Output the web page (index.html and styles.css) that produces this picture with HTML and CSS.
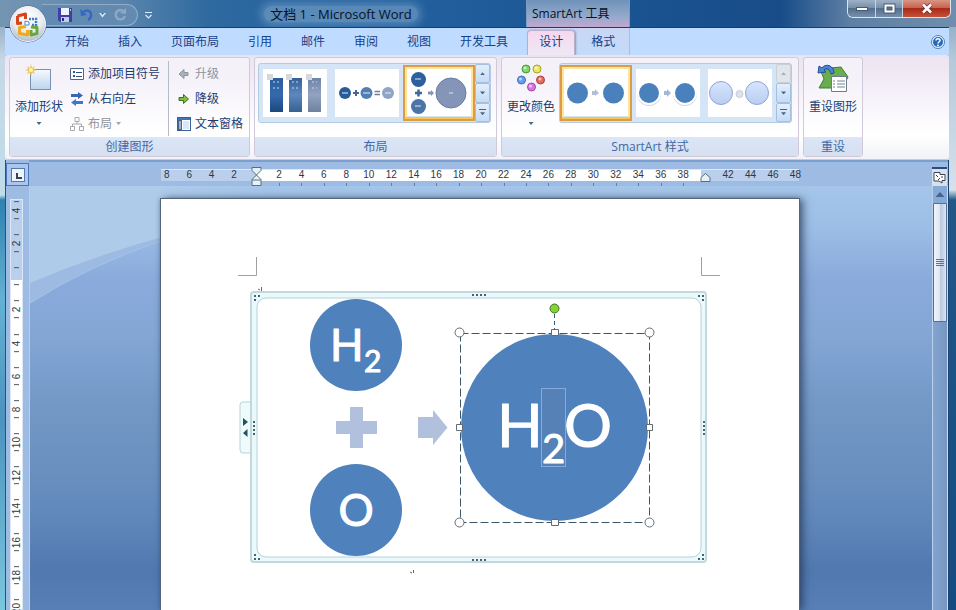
FILE: index.html
```html
<!DOCTYPE html>
<html lang="zh-CN">
<head>
<meta charset="utf-8">
<title>文档 1 - Microsoft Word</title>
<link rel="stylesheet" href="styles.css">
</head>
<body>
<div class="window">
  <header class="titlebar">
    <div class="quick">
      <button class="tool" aria-label="保存"><svg width="14" height="14" viewBox="0 0 14 14"><path d="M0 0H14V14H2L0 12Z" fill="#403fa6"/><path d="M3 0H11V7H3Z" fill="#eef2ff"/><path d="M3 9H11V14H3Z" fill="#c6cbe6"/><path d="M4 10H6V13H4Z" fill="#222a7a"/><path d="M12 1H13V3H12Z" fill="#b9c4f5"/></svg></button>
      <button class="tool" aria-label="撤消"><svg width="13" height="14" viewBox="0 0 13 14"><path d="M2 5C6 1 11 2 11 7C11 9 10 11 8 12" fill="none" stroke="#3567c6" stroke-width="2.4"/><path d="M0 1L1 8L7 7Z" fill="#3567c6"/></svg></button>
      <button class="tool narrow" aria-label="撤消列表"><svg width="7" height="5" viewBox="0 0 7 5"><path d="M0 0H7L3.500 4.500Z" fill="#d8e6f5"/><path d="M2 0H5L3.500 2Z" fill="#45698f"/></svg></button>
      <button class="tool" aria-label="恢复"><svg width="13" height="14" viewBox="0 0 13 14"><path d="M10 4C6 0 1 3 2 8C3 12 9 13 11 8" fill="none" stroke="#8ea8c2" stroke-width="2.400"/><path d="M6 5L12 6L12 0Z" fill="#8ea8c2"/></svg></button>
    </div>
    <button class="customize" aria-label="自定义快速访问工具栏"><svg width="7" height="7" viewBox="0 0 7 7"><path d="M0 .5H7" stroke="#dceafa"/><path d="M.5 3L3.500 6L6.500 3" fill="none" stroke="#dceafa" stroke-width="1.200"/></svg></button>
    <h1 class="doc-title"><span>文档 1 - Microsoft Word</span></h1>
    <div class="context-title"><span>SmartArt 工具</span></div>
    <div class="controls">
      <button aria-label="最小化"><svg width="12" height="6" viewBox="0 0 12 6"><rect x=".5" y="1.500" width="11" height="3" fill="#fff" stroke="#4a5a6c"/></svg></button>
      <button aria-label="还原"><svg width="13" height="11" viewBox="0 0 13 11"><rect x="1" y="1" width="11" height="9" fill="#fff" stroke="#4a5a6c"/><rect x="4" y="4" width="5" height="3" fill="#60748c" stroke="#4a5a6c"/></svg></button>
      <button class="close" aria-label="关闭"><svg width="12" height="11" viewBox="0 0 12 11"><path d="M2 1.500L10 9.500M10 1.500L2 9.500" stroke="#6c3431" stroke-width="4"/><path d="M2 1.500L10 9.500M10 1.500L2 9.500" stroke="#fff" stroke-width="2.500"/></svg></button>
    </div>
  </header>
  <button class="office" aria-label="Office 按钮">
    <svg width="38" height="38" viewBox="0 0 38 38">
      <defs><radialGradient id="orb" cx=".5" cy=".3" r=".75"><stop offset="0" stop-color="#fff"/><stop offset=".6" stop-color="#e6eaf0"/><stop offset="1" stop-color="#a4b0c2"/></radialGradient></defs>
      <circle cx="19" cy="19" r="18.500" fill="#4b6787"/><circle cx="19" cy="19" r="17.500" fill="url(#orb)" stroke="#f4f7fa"/>
      <path d="M8.500 11L16.500 9V14M8.500 11V18.500L13 18" fill="none" stroke="#d9431c" stroke-width="3" stroke-linejoin="round"/>
      <path d="M20 14H27V20H22" fill="none" stroke="#3c80c4" stroke-width="2.500" stroke-dasharray="2 1"/>
      <path d="M16 16L20 17V20H16Z" fill="#fff" stroke="#4a8ccb"/>
      <path d="M17 21.500L10.500 22.500V28.500L18.500 30V25" fill="none" stroke="#efa91b" stroke-width="3" stroke-linejoin="round"/>
      <path d="M22 22L28 22.500V28.500L22 30V25" fill="none" stroke="#68a83a" stroke-width="3" stroke-linejoin="round"/>
    </svg>
  </button>
  <nav class="tabs">
    <a href="#">开始</a><a href="#">插入</a><a href="#">页面布局</a><a href="#">引用</a><a href="#">邮件</a><a href="#">审阅</a><a href="#">视图</a><a href="#">开发工具</a>
    <div class="context-tabs"><a href="#" class="active">设计</a><a href="#">格式</a></div>
    <button class="help" aria-label="帮助"><svg width="14" height="14" viewBox="0 0 14 14"><circle cx="7" cy="7" r="6.500" fill="#eef5ff" stroke="#4a80c0"/><circle cx="7" cy="7" r="5" fill="#246abc"/><path d="M5 5.500C5 3 9 3 9 5.500C9 7 7 7 7 8.500" fill="none" stroke="#fff" stroke-width="1.500"/><circle cx="7" cy="10.500" r="1" fill="#fff"/></svg></button>
  </nav>

  <section class="ribbon">
    <div class="group">
      <div class="group-body">
        <button class="big"><svg width="28" height="28" viewBox="0 0 28 28"><defs><linearGradient id="sq" x2="0" y2="1"><stop offset="0" stop-color="#f6faff"/><stop offset="1" stop-color="#bcd4f0"/></linearGradient></defs><rect x="5.500" y="5.500" width="20" height="20" fill="url(#sq)" stroke="#7890b4"/><path d="M6 0L7 4L10 2L8.500 5L12 6L8.500 7L10 10L7 8.500L6 12L5 8.500L2 10L3.500 7L0 6L3.500 5L2 2L5 4Z" fill="#edc24c"/><circle cx="6" cy="6" r="2" fill="#fff6b0"/></svg>添加形状<i class="arrow"></i></button>
        <div class="stack lined">
          <button><svg width="14" height="14" viewBox="0 0 14 14"><path d="M.5 1.500H13.500V12.500H.5Z" fill="#fff" stroke="#4f6689"/><path d="M3 4H5V6H3ZM3 8H5V10H3ZM6 5H12V6H6ZM6 9H12V10H6Z" fill="#314f86"/></svg>添加项目符号</button>
          <button><svg width="14" height="14" viewBox="0 0 14 14"><path d="M1 2H8V0L13 3.500L8 7V5H1Z" fill="#3468b5"/><path d="M13 9H6V7L1 10.500L6 14V12H13Z" fill="#3e77c8"/></svg>从右向左</button>
          <button class="off"><svg width="14" height="14" viewBox="0 0 14 14"><path d="M5 .5H9V4.500H5ZM.5 9.500H4.500V13.500H.5ZM9.500 9.500H13.500V13.500H9.500ZM7 5V7M2.500 9V7H11.500V9" fill="none" stroke="#a5a8ae"/></svg>布局<i class="arrow"></i></button>
        </div>
        <div class="stack">
          <button class="off"><svg width="14" height="14" viewBox="0 0 14 14"><path d="M2 7L7 2.500V5.500H11V8.500H7V11.500Z" fill="#a9b1ba" stroke="#8996a4"/></svg>升级</button>
          <button><svg width="14" height="14" viewBox="0 0 14 14"><path d="M11.500 7L6.500 2.500V5.500H2V8.500H6.500V11.500Z" fill="#7fbe3c" stroke="#3e6d2c"/></svg>降级</button>
          <button><svg width="14" height="14" viewBox="0 0 14 14"><rect x=".5" y=".5" width="13" height="13" fill="#fff" stroke="#3e5f91"/><path d="M1 1H13V3H1Z" fill="#4371b6"/><path d="M1 3H5V13H1Z" fill="#3e6498"/><path d="M2 5H4M2 7H4M2 9H4M2 11H4" stroke="#fff"/><path d="M6 4H12V12H6Z" fill="#d7e6fa"/></svg>文本窗格</button>
        </div>
      </div>
      <h2>创建图形</h2>
    </div>

    <div class="group">
      <div class="group-body gallery-body">
        <div class="gallery">
          <button class="thumb" aria-label="梯形列表"><svg width="72" height="56" viewBox="0 0 72 56"><defs><linearGradient id="a" x2="0" y2="1"><stop stop-color="#2d5d9c"/><stop offset=".5" stop-color="#336aac"/><stop offset="1" stop-color="#1b477e"/></linearGradient><linearGradient id="b" x2="0" y2="1"><stop stop-color="#355f98"/><stop offset=".5" stop-color="#5d88bd"/><stop offset="1" stop-color="#36608f"/></linearGradient><linearGradient id="c" x2="0" y2="1"><stop stop-color="#7084aa"/><stop offset=".5" stop-color="#92a2c0"/><stop offset="1" stop-color="#6e819f"/></linearGradient></defs><path d="M4 4H68V52H4Z" fill="#fff"/><path d="M11 13H24V47H11Z" fill="url(#a)"/><path d="M30 13H43V47H30Z" fill="url(#b)"/><path d="M49 13H62V47H49Z" fill="url(#c)"/><path d="M8 9H14V15H8ZM27 9H33V15H27ZM47 9H53V15H47Z" fill="#d5d8dd"/><path d="M14 17H20M14 23H20M33 17H39M33 23H39M53 17H58M53 23H58" stroke="#c9d8ef" stroke-dasharray="2 2"/></svg></button>
          <button class="thumb" aria-label="公式"><svg width="72" height="56" viewBox="0 0 72 56"><path d="M4 4H68V52H4Z" fill="#fff"/><circle cx="14" cy="28" r="6" fill="#285c98"/><circle cx="35.500" cy="28" r="6" fill="#507fb5"/><circle cx="57" cy="28" r="6" fill="#8fa5c3"/><path d="M11 28H17M32 28H39M54 28H60" stroke="#e6eff9"/><path d="M22 28H28M25 25V31" stroke="#4b658f" stroke-width="2"/><path d="M43.500 26.500H49M43.500 29.500H49" stroke="#6f7f96" stroke-width="1.500"/></svg></button>
          <button class="thumb selected" aria-label="垂直公式"><svg width="72" height="56" viewBox="0 0 72 56"><path d="M3 3H69V53H3Z" fill="#fff"/><circle cx="15.500" cy="14.500" r="7.500" fill="#2c619e"/><circle cx="15.500" cy="41.500" r="7.500" fill="#4b74a8"/><path d="M12 28H19M15.500 24.500V31.500" stroke="#3c689e" stroke-width="2.500"/><path d="M25 26.500H28V25L31 28L28 31V29.500H25Z" fill="#8194b6"/><circle cx="48" cy="28" r="15" fill="#8495b8" stroke="#687ca4"/><path d="M12 14H18M12 41H18M46 28H50" stroke="#dfe8f4"/></svg></button>
          <div class="scroller"><button aria-label="上一行"><i class="arrow up"></i></button><button aria-label="下一行"><i class="arrow"></i></button><button aria-label="更多布局"><i class="arrow more"></i></button></div>
        </div>
      </div>
      <h2>布局</h2>
    </div>

    <div class="group">
      <div class="group-body styles-body">
        <button class="big"><svg width="28" height="28" viewBox="0 0 28 28"><circle cx="9" cy="5" r="4" fill="#80d66b" stroke="#499940"/><circle cx="20" cy="5" r="4" fill="#eee659" stroke="#a39f3c"/><circle cx="4.500" cy="16" r="4" fill="#649bed" stroke="#416eb8"/><circle cx="23.500" cy="16" r="4" fill="#e46962" stroke="#aa443d"/><circle cx="14.500" cy="23" r="4" fill="#d973e5" stroke="#9c48ac"/><g fill="#fff" opacity=".6"><circle cx="8" cy="4" r="1.500"/><circle cx="19" cy="4" r="1.500"/><circle cx="3.500" cy="15" r="1.500"/><circle cx="23" cy="15" r="1.500"/><circle cx="13.500" cy="22" r="1.500"/></g></svg>更改颜色<i class="arrow"></i></button>
        <div class="gallery">
          <button class="thumb selected" aria-label="简单填充"><svg width="72" height="56" viewBox="0 0 72 56"><path d="M3 3H69V53H3Z" fill="#fff"/><circle cx="17.500" cy="28" r="10.500" fill="#4a81bd"/><circle cx="53.500" cy="28" r="10.500" fill="#4a81bd"/><path d="M32 26H35V24L39 28L35 31V30H32Z" fill="#b0bfdb"/></svg></button>
          <button class="thumb" aria-label="白色轮廓"><svg width="72" height="56" viewBox="0 0 72 56"><path d="M4 4H68V52H4Z" fill="#fff"/><circle cx="17" cy="29" r="12" fill="#d0d6de"/><circle cx="53" cy="29" r="12" fill="#d0d6de"/><circle cx="17" cy="28" r="11" fill="#4a81bd" stroke="#fff" stroke-width="2"/><circle cx="53" cy="28" r="11" fill="#4a81bd" stroke="#fff" stroke-width="2"/><path d="M32 26H35V24L39 28L35 32V30H32Z" fill="#a5b7d5"/></svg></button>
          <button class="thumb" aria-label="细微效果"><svg width="72" height="56" viewBox="0 0 72 56"><defs><linearGradient id="d" x2="0" y2="1"><stop stop-color="#d7e6ff"/><stop offset="1" stop-color="#b8cdf0"/></linearGradient></defs><path d="M4 4H68V52H4Z" fill="#fff"/><circle cx="17" cy="28" r="11.500" fill="url(#d)" stroke="#91a5cf"/><circle cx="53" cy="28" r="11.500" fill="url(#d)" stroke="#91a5cf"/><circle cx="35.500" cy="29" r="3.500" fill="#dde1ec" stroke="#c7ccda"/></svg></button>
          <div class="scroller"><button disabled aria-label="上一行"><i class="arrow up"></i></button><button aria-label="下一行"><i class="arrow"></i></button><button aria-label="更多样式"><i class="arrow more"></i></button></div>
        </div>
      </div>
      <h2>SmartArt 样式</h2>
    </div>

    <div class="group">
      <div class="group-body reset-body">
        <button class="big"><svg width="32" height="28" viewBox="0 0 32 28"><path d="M3 5L24 3L31 13L25 24H2L7 15Z" fill="#69ad4e" stroke="#39813a"/><path d="M14.500 12.500H29.500V27.500H14.500Z" fill="#fff" stroke="#6d7d87"/><path d="M16 17H18M20 17H28M16 20H18M20 20H28M16 23H18M20 23H28" stroke="#71828f"/><path d="M17 9C17 1 8 -1 5 4L2 2L1 9L9 8L7 6C10 3 13 6 14 10Z" fill="#4a83d7" stroke="#234e98"/></svg>重设图形</button>
      </div>
      <h2>重设</h2>
    </div>
  </section>

  <main class="work">
    <div class="corner"><button aria-label="左对齐制表符"><b></b></button></div>
    <div class="hruler-row">
      <div class="hruler">
        <div class="hcells"><span>8</span><span>6</span><span>4</span><span>2</span><span class="stop"><svg class="indent" width="11" height="19" viewBox="0 0 11 19"><path d="M1 .5H10V3.500L5.500 8L10 12.500V18.500H1V12.500L5.500 8L1 3.500ZM1 13H10" fill="#e7f0f6" stroke="#52727f"/></svg></span><span>2</span><span>4</span><span>6</span><span>8</span><span>10</span><span>12</span><span>14</span><span>16</span><span>18</span><span>20</span><span>22</span><span>24</span><span>26</span><span>28</span><span>30</span><span>32</span><span>34</span><span>36</span><span>38</span><span class="stop"><svg class="right-indent" width="11" height="9" viewBox="0 0 11 9"><path d="M1 8.500V4.500L5.500 .5L10 4.500V8.500Z" fill="#e7f0f6" stroke="#52727f"/></svg></span><span>42</span><span>44</span><span>46</span><span>48</span></div>
      </div>
    </div>
    <div class="toggle"><button aria-label="标尺"><svg width="13" height="13" viewBox="0 0 13 13"><path d="M1 1.500H7V3.500H12V9.500H9V12L6 10H1Z" fill="#fff" stroke="#3b4353"/><path d="M3 4L5 6M8 6H10M5 9L7 7" stroke="#3b4353"/></svg></button></div>

    <div class="vruler-col"><div class="vruler"><span>4</span><span>2</span><span></span><span>2</span><span>4</span><span>6</span><span>8</span><span>10</span><span>12</span><span>14</span><span>16</span><span>18</span><span>20</span></div></div>

    <div class="canvas">
      <svg class="swoosh" width="240" height="120" viewBox="0 0 240 120"><defs><linearGradient id="sw"><stop offset=".55" stop-color="#aecbea"/><stop offset="1" stop-color="#aecbea" stop-opacity="0"/></linearGradient></defs><path d="M0 0H134V54Q60 79 0 117Z" fill="#9dbbe2"/><path d="M0 0H240V26Q110 50 0 97Z" fill="url(#sw)"/><path d="M0 117Q60 79 133 54" fill="none" stroke="#a5c3e7"/></svg>
      <article class="page">
        <svg class="art" viewBox="161 199 638 411" role="img" aria-label="SmartArt 图形">
          <path d="M238 275.500H256.500V257M720 275.500H701.500V257" fill="none" stroke="#a0a0a0"/>
          <path d="M261.500 287V291M260 290L258 289M413.500 570V573M412 573L410 572" stroke="#666"/>
          <path d="M251.500 402H243Q240 402 240 405V450Q240 453 243 453H251.500Z" fill="#effafb" stroke="#b6d3d6"/>
          <rect x="251" y="292" width="455" height="270" rx="3" fill="#eaf9fb" stroke="#c3d8dc" stroke-width="2"/>
          <rect x="257" y="298" width="444" height="259" rx="9" fill="#fff" stroke="#b9d0d6"/>
          <path d="M243 418L248 422L243 426ZM247.500 429L243 433L247.500 437Z" fill="#205463"/>
          <g fill="none" stroke="#44666f" stroke-width="2"><path d="M472 295H487M472 560H487" stroke-dasharray="2 2"/><path d="M254 421V435M704 421V435" stroke-dasharray="2 2"/><path d="M254 296H260M254 300H256M698 296H704M702 300H704M254 555H256M254 559H260M702 555H704M698 559H704" stroke-dasharray="2 2"/></g>
          <g fill="#4f81bc"><circle cx="356" cy="345" r="46"/><circle cx="356" cy="510" r="46"/><circle cx="554.500" cy="427.500" r="93.500"/></g>
          <path d="M350 407H363V421H377V434H363V448H350V434H336V421H350ZM418 417H433V410L447.500 427.500L433 445V438H418Z" fill="#b1c1dd"/>
          <rect x="541.500" y="388.500" width="24" height="78" fill="#5581b7" stroke="#85aadb"/>
          <g class="formula"><text x="330" y="361" class="small">H</text><text x="364" y="372" class="small-sub">2</text><text x="356" y="526" class="small mid">O</text><text x="497" y="447" class="large">H</text><text x="542" y="463" class="large-sub">2</text><text x="564" y="447" class="large">O</text></g>
          <path d="M460.500 333.500H649.500V522.500H460.500Z" fill="none" stroke="#3c5868" stroke-dasharray="8 3"/>
          <path d="M554.500 314V329" stroke="#3c5878" stroke-dasharray="4 3"/>
          <circle cx="554.500" cy="308.500" r="4.500" fill="#80d52e" stroke="#496b34"/>
          <g fill="#fff" stroke="#606d76"><circle cx="459.500" cy="332.500" r="4.500"/><circle cx="649.500" cy="332.500" r="4.500"/><circle cx="459.500" cy="522.500" r="4.500"/><circle cx="649.500" cy="522.500" r="4.500"/><path d="M551.500 329.500H558.500V335.500H551.500ZM551.500 519.500H558.500V525.500H551.500ZM456.500 424.500H462.500V430.500H456.500ZM646.500 424.500H652.500V430.500H646.500Z"/></g>
        </svg>
      </article>
    </div>
    <div class="scrollbar"><button class="line-up" aria-label="向上滚动"><i class="arrow up"></i></button><div class="handle"><b></b></div></div>
  </main>
</div>
</body>
</html>
```
FILE: styles.css
```css
* { box-sizing: border-box; }
body {
  margin: 0;
  height: 100vh;
  overflow: hidden;
  font: 12px/16px "Open Sans", "Noto Sans CJK SC", sans-serif;
  color: #1c3d70;
  background: linear-gradient(#7c9ebc 0, #b5c9da 60px, #d5e1ec 190px, #205888 200px, #164a82 100%);
}
button { border: 0; padding: 0; margin: 0; background: none; font: inherit; color: inherit; }
a { color: inherit; text-decoration: none; }
svg { display: block; flex: none; }
h1, h2 { margin: 0; font: inherit; }

.window {
  position: relative;
  height: 100%;
  display: flex;
  flex-direction: column;
  background: linear-gradient(#6f93b4, #c7d8e6 60px, #bfdcea 195px, #2f81af 200px, #63b2d4 300px, #4c93be 420px, #79c7dd) left / 5px 100% no-repeat;
  padding: 0 7px 0 5px;
}
.titlebar {
  flex: none;
  display: grid;
  grid-template-columns: 134px 18px 370px 104px 1fr 104px;
  height: 27px;
  margin: 0 -7px 0 -5px;
  padding: 0 5px 0 4px;
  background: linear-gradient(90deg, #7495b2 0, #5b86ae 120px, #2e699f 210px, #2563a0 350px, #1b5492 620px, #174c88 780px, #5e7fa4 850px, #708eac 100%);
}
.quick {
  display: flex;
  align-items: center;
  gap: 8px;
  height: 22px;
  margin: 4px 0 0 38px;
  padding-left: 16px;
  border: 1px solid #91abc5;
  border-left: 0;
  border-radius: 0 12px 12px 0;
  background: #638bb2;
}
.tool.narrow { margin: 0 0 0 -2px; }
.customize { display: grid; place-items: center; padding: 4px 0 0 3px; }
.doc-title, .context-title { display: grid; place-items: center; color: #07121f; }
.doc-title { font-size: 13px; }
.doc-title span {
  padding: 0 6px;
  border-radius: 8px;
  background: rgba(150, 184, 214, .45);
  box-shadow: 0 0 8px 3px rgba(150, 184, 214, .45);
}
.context-title {
  justify-items: start;
  padding-left: 5px;
  background: linear-gradient(#6f92b8, #93a9cb 16px, #c1a8cf);
  border: solid #7d9cc2;
  border-width: 0 1px;
}
.controls {
  grid-column: 6;
  display: grid;
  grid-template-columns: 28px 27px 1fr;
  height: 18px;
  border: 1px solid #dbe5ef;
  border-top: 0;
  border-radius: 0 0 6px 6px;
  overflow: hidden;
}
.controls button {
  display: grid;
  place-items: center;
  border-right: 1px solid #c5d3e1;
  background: linear-gradient(#9fb1c6, #7890aa 45%, #536f8f 50%, #768fab);
}
.controls .close { border: 0; background: linear-gradient(#d99584, #c76450 45%, #a82a18 50%, #c65138); }
.office { position: absolute; left: 9px; top: 5px; z-index: 2; }

.tabs {
  flex: none;
  display: flex;
  gap: 5px;
  height: 28px;
  padding: 0 4px 0 48px;
  border-top: 1px solid #173f6d;
  background: #bfdbff;
  color: #15428b;
}
.tabs a { padding: 6px 12px; }
.context-tabs {
  display: flex;
  gap: 4px;
  margin-left: 2px;
  padding: 2px 2px 0 0;
  border-right: 1px solid #a7c0dd;
  background: linear-gradient(#c9d6f4, #c3dbfa);
}
.context-tabs a { padding: 4px 12px; }
.tabs .active {
  border: solid #b9aecb;
  border-width: 1px 1px 0;
  border-radius: 4px 4px 0 0;
  padding: 3px 11px 4px;
  background: linear-gradient(#f6d8ee, #eee8f5);
  box-shadow: 1px 0 2px #8899b8;
}
.help { margin-left: auto; }

.ribbon {
  flex: none;
  display: flex;
  gap: 4px;
  height: 105px;
  padding: 2px 4px 2px;
  border-bottom: 1px solid #c5cddd;
  border-radius: 3px;
  background: linear-gradient(#ebe3f1, #f7f3fa 45px, #fff 80px, #f1f2f7);
}
.group {
  display: flex;
  flex-direction: column;
  border: 1px solid #cfc9da;
  border-radius: 3px;
  background: linear-gradient(#f5f1f9, #f4f1f9 20px, #fbf9fc 50px, #fff 75px);
  overflow: hidden;
}
.group-body { flex: 1; display: flex; align-items: flex-start; padding: 3px 6px 0 5px; }
.group h2 { height: 19px; line-height: 20px; text-align: center; color: #4268a5; background: linear-gradient(#dbe6f6, #d5dff0); }
.big {
  display: flex;
  flex-direction: column;
  align-items: center;
  height: 72px;
  padding-top: 3px;
}
.big svg { margin-bottom: 7px; }
.big .arrow { margin-top: 7px; }
.stack { display: grid; grid-auto-rows: 25px; padding-left: 7px; }
.stack button { display: flex; align-items: center; gap: 4px; }
.lined { padding-right: 8px; border-right: 1px solid #b6bbc8; margin-right: 1px; }
.off { color: #929298; }
.arrow { width: 5px; height: 3px; background: currentColor; clip-path: polygon(0 0, 100% 0, 50% 100%); color: #45658c; }
.off .arrow { color: #a2a2a8; }
.arrow.up { clip-path: polygon(50% 0, 100% 100%, 0 100%); }
.arrow.more { width: 7px; height: 6px; background: none; clip-path: none; border-top: 1px solid; }
.arrow.more::after { content: ""; display: block; height: 3px; margin: 2px 1px 0; background: currentColor; clip-path: polygon(0 0, 100% 0, 50% 100%); }
.group-body.gallery-body { padding: 5px 5px 0 3px; }
.group-body.styles-body { padding: 3px 6px 0 5px; }
.styles-body .gallery { margin: 2px 0 0 4px; }
.group-body.reset-body { padding: 3px 5px 0; }
.gallery { display: flex; padding: 1px 0; border: 1px solid #b4cbe4; border-radius: 3px; background: #d5e5f5; }
.thumb.selected { box-shadow: inset 0 0 0 2px #dd9b46, inset 0 -3px 0 1px #f4c755, inset 0 0 0 4px #ffe49a; }
.thumb.selected svg { clip-path: inset(4px 4px 5px); }
.scroller { display: grid; grid-template-rows: 1fr 1fr 1fr; width: 15px; margin: -1px 0; }
.scroller button { display: grid; place-items: center; border: 1px solid #a5c0df; border-radius: 2px; background: linear-gradient(#e2eefb, #c5dcf5); }
.scroller button:disabled { background: #e2e5e9; border-color: #c8cbd0; opacity: .8; }
.scroller button:disabled .arrow { color: #9b9ea2; }

.work {
  flex: 1;
  min-height: 0;
  display: grid;
  grid-template: 26px 1fr / 23px 1fr 16px;
  border-left: 1px solid #2d4f7c;
  border-right: 1px solid #1c426d;
  background: #9dbbe3;
}
.corner { padding: 3px 0 0; }
.corner button { width: 23px; height: 23px; display: grid; place-items: center; border: 1px solid #4c76b8; background: #aac6ec; }
.corner b { width: 14px; height: 14px; border: 1px solid #5478b1; background: linear-gradient(#39424e, #39424e) 4px 4px / 2px 6px no-repeat, linear-gradient(#39424e, #39424e) 4px 8px / 6px 2px no-repeat, #edf4fd; }
.hruler-row { display: flex; justify-content: center; padding: 8px 2px 0 0; border-top: 2px solid #7d9fce; }
.hruler { width: 638px; height: 18px; margin-top: -1px; background: linear-gradient(90deg, #b9cfec 96px, #fff 96px, #fff 540px, #b9cfec 540px) top / 100% 12px no-repeat; box-shadow: inset 0 1px #dce8f5; }
.hcells { display: flex; margin: 0 -8px 0 -5px; font: 10px/12px "Liberation Sans", sans-serif; color: #303740; }
.hcells span { flex: 1 1 0; text-align: center; position: relative; }
.hcells span::after { content: ""; position: absolute; left: 50%; top: 14px; height: 3px; border-left: 1px solid #65819f; }
.hcells span.stop::after, .hcells span:nth-child(-n+4)::after, .hcells span:nth-last-child(-n+4)::after { display: none; }
.indent { position: absolute; left: 6px; top: -2px; }
.right-indent { position: absolute; left: 6px; top: 4px; }
.toggle { padding-top: 5px; border-top: 2px solid #7d9fce; }
.toggle button { width: 15px; height: 19px; display: grid; place-items: center; border-top: 2px solid #294c83; background: #d8e0ec; }

.vruler-col { padding: 13px 6px 0 4px; min-height: 0; overflow: hidden; }
.vruler { height: 100%; background: linear-gradient(#b9cfec 80px, #fff 80px); border: 1px solid #dce8f5; display: flex; flex-direction: column; font: 10px/11px "Liberation Sans", sans-serif; color: #303740; }
.vruler::before { content: ""; margin-top: -6px; }
.vruler::after { content: ""; margin-bottom: -16px; }
.vruler span { flex: 1 1 0; writing-mode: vertical-rl; transform: rotate(180deg); text-align: center; background: linear-gradient(#4c5661, #4c5661) 50% 8px / 5px 1px no-repeat, linear-gradient(#4c5661, #4c5661) 50% 25px / 5px 1px no-repeat; }

.canvas {
  position: relative;
  display: flex;
  justify-content: center;
  min-height: 0;
  overflow: hidden;
  padding: 13px 3px 0 0;
  background: linear-gradient(#a5c6ea, #9bbce5 45px, #8aaadb 95px, #83a6d5 150px, #7398c6 220px, #698fbe 290px, #6088bb 330px, #5c82b8 350px, #5079b0 385px, #5880b7);
  border-left: 1px solid #b3ceee;
}
.swoosh { position: absolute; left: 0; top: 0; }
.page {
  position: relative;
  width: 638px;
  background: #fff;
  box-shadow: 0 0 0 1px #53647b, 4px 0 8px rgba(38, 55, 82, .75), -1px 0 4px rgba(38, 55, 82, .4);
}
.art { width: 100%; }
.formula { font-family: Lato, sans-serif; fill: #fff; stroke: #fff; stroke-width: 1px; stroke-linejoin: round; }
.small { font-size: 44px; }
.mid { text-anchor: middle; }
.small-sub { font-size: 30px; }
.large { font-size: 60px; }
.large-sub { font-size: 40px; }

.scrollbar { border-left: 1px solid #b8d0ee; border-right: 1px solid #c7dcf3; background: linear-gradient(90deg, #83a4d0, #7796c2); }
.line-up { display: grid; place-items: center; width: 100%; height: 17px; background: #86aad8; }
.line-up .arrow { width: 9px; height: 5px; }
.handle { height: 119px; display: grid; place-items: center; border: 1px solid #506f9c; border-radius: 1px; background: linear-gradient(90deg, #eef4fb, #dfe8f4 45%, #b9c9df 55%, #dbe5f1); }
.handle b { width: 8px; height: 8px; background: repeating-linear-gradient(#5c7391 0 1px, transparent 1px 2px); }
```
